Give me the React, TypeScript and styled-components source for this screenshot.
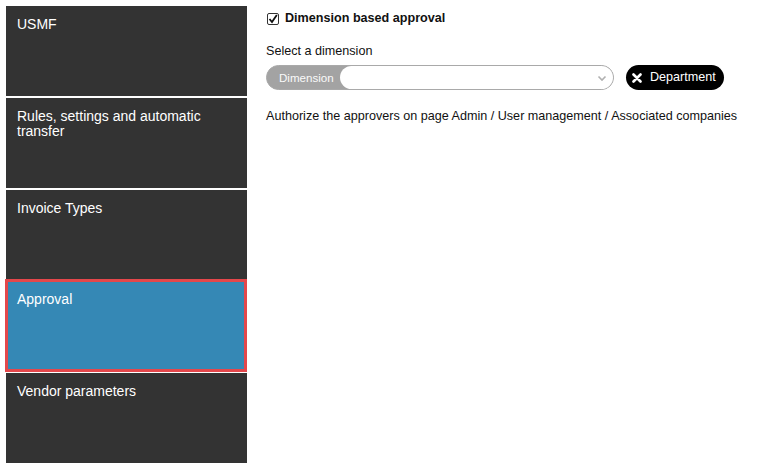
import React from "react";
import styled, { createGlobalStyle } from "styled-components";

const Global = createGlobalStyle`
  html, body { margin: 0; padding: 0; background: #ffffff; }
  body { font-family: "Liberation Sans", Arial, sans-serif; color: #111; }
`;

const Page = styled.div`
  display: flex;
  align-items: flex-start;
  padding: 6px;
  gap: 19px;
`;

const Sidebar = styled.nav`
  width: 241px;
  flex: 0 0 241px;
  display: flex;
  flex-direction: column;
  gap: 2px;
`;

const Tile = styled.div<{ $active?: boolean }>`
  box-sizing: border-box;
  height: ${(p) => (p.$active ? "93px" : "90px")};
  margin: ${(p) => (p.$active ? "-3px 0 -1px -1px" : "0")};
  padding: ${(p) => (p.$active ? "10px 9px 9px 9px" : "11px")};
  background: ${(p) => (p.$active ? "#3588b5" : "#333333")};
  border: ${(p) => (p.$active ? "3px solid #e4474b" : "none")};
  color: #ffffff;
  font-size: 14px;
  line-height: 15px;
`;

const Content = styled.main`
  flex: 1;
  padding-top: 5px;
  display: flex;
  flex-direction: column;
  font-size: 12.6px;
  line-height: 15px;
`;

const CheckRow = styled.label`
  display: flex;
  align-items: center;
  gap: 6px;
  font-weight: bold;
  margin-left: 1px;
`;

const Box = styled.span`
  box-sizing: border-box;
  width: 12px;
  height: 12px;
  border: 1px solid #333;
  border-radius: 2px;
  display: inline-flex;
  align-items: center;
  justify-content: center;
  background: #fff;
`;

const FieldLabel = styled.div`
  margin-top: 18px;
`;

const SelectRow = styled.div`
  display: flex;
  align-items: center;
  gap: 12px;
  margin-top: 6px;
`;

const Pill = styled.div`
  box-sizing: border-box;
  width: 348px;
  height: 25px;
  border: 1px solid #a9a9a9;
  border-radius: 13px;
  background: #a3a3a3;
  display: flex;
  align-items: stretch;
  overflow: hidden;
`;

const PillLabel = styled.span`
  display: flex;
  align-items: center;
  padding: 0 8px 0 12px;
  color: #fafafa;
  font-size: 11.6px;
  width: 53px;
`;

const PillSelect = styled.div`
  flex: 1;
  background: #ffffff;
  border-radius: 12px 0 0 12px;
  display: flex;
  align-items: center;
  justify-content: flex-end;
  padding-right: 4px;
`;

const Chip = styled.div`
  height: 25px;
  box-sizing: border-box;
  border-radius: 13px;
  background: #000;
  color: #fff;
  display: flex;
  align-items: center;
  gap: 8px;
  padding: 0 8px 0 6px;
  font-size: 12.6px;
`;

const Info = styled.div`
  margin-top: 19px;
`;

const tiles = [
  "USMF",
  "Rules, settings and automatic transfer",
  "Invoice Types",
  "Approval",
  "Vendor parameters",
];

export default function App() {
  return (
    <>
      <Global />
      <Page>
        <Sidebar>
          {tiles.map((t) => (
            <Tile key={t} $active={t === "Approval"}>
              {t}
            </Tile>
          ))}
        </Sidebar>
        <Content>
          <CheckRow>
            <Box>
              <svg width="10" height="10" viewBox="0 0 10 10">
                <path d="M1.5 5 L4 8 L8.8 1" fill="none" stroke="#111" strokeWidth="1.8" />
              </svg>
            </Box>
            Dimension based approval
          </CheckRow>
          <FieldLabel>Select a dimension</FieldLabel>
          <SelectRow>
            <Pill>
              <PillLabel>Dimension</PillLabel>
              <PillSelect>
                <svg width="14" height="14" viewBox="0 0 14 14">
                  <path d="M3.5 5.5 L7 9 L10.5 5.5" fill="none" stroke="#b0b0b0" strokeWidth="1.6" />
                </svg>
              </PillSelect>
            </Pill>
            <Chip>
              <svg width="10" height="10" viewBox="0 0 10 10">
                <path d="M1.5 1.5 L8.5 8.5 M8.5 1.5 L1.5 8.5" stroke="#fff" strokeWidth="2.6" strokeLinecap="round" />
              </svg>
              Department
            </Chip>
          </SelectRow>
          <Info>Authorize the approvers on page Admin / User management / Associated companies</Info>
        </Content>
      </Page>
    </>
  );
}
